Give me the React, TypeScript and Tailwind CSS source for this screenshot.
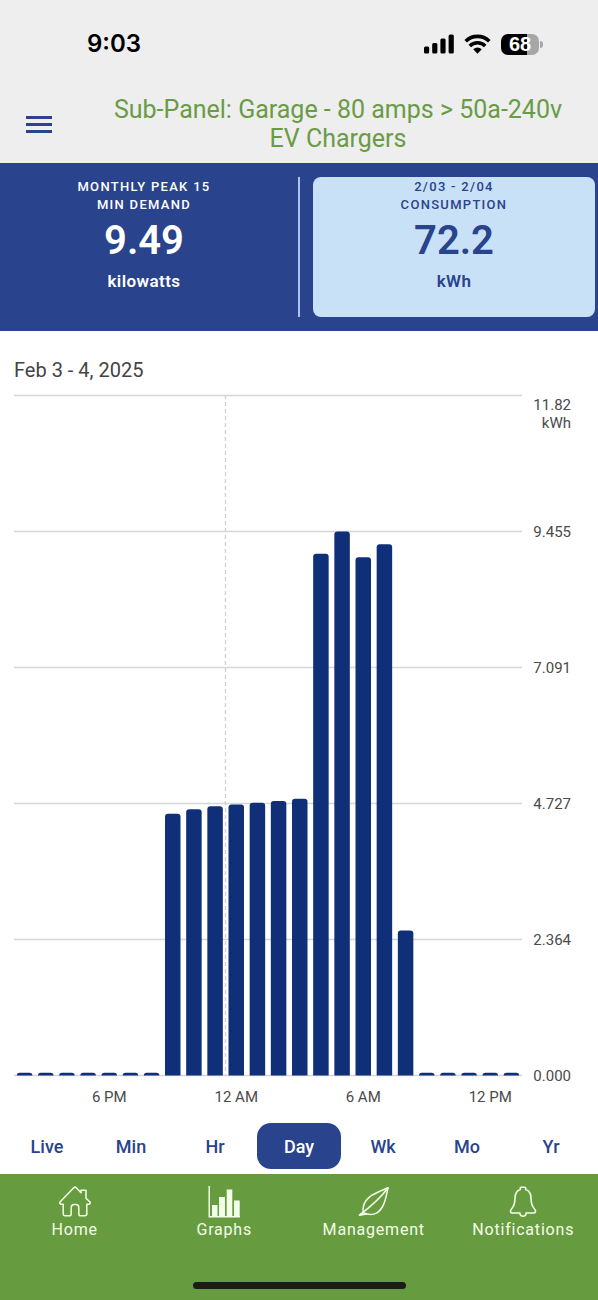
import React, { useState } from "react";
import clsx from "clsx";

const readings = [
  0, 0, 0, 0, 0, 0, 0, 4.55, 4.63, 4.68, 4.71, 4.74, 4.77, 4.81, 9.07, 9.455,
  9.01, 9.235, 2.52, 0, 0, 0, 0, 0,
];

const ranges = ["Live", "Min", "Hr", "Day", "Wk", "Mo", "Yr"];

const yTicks = ["9.455", "7.091", "4.727", "2.364", "0.000"];

const xTicks = [
  { label: "6 PM", index: 4 },
  { label: "12 AM", index: 10 },
  { label: "6 AM", index: 16 },
  { label: "12 PM", index: 22 },
];

const PLOT_WIDTH = 508;
const PLOT_HEIGHT = 680;
const MAX_KWH = 11.82;
const BAND = PLOT_WIDTH / readings.length;
const BAR_WIDTH = 15.5;

function StatusBar() {
  return (
    <div className="flex h-[88px] items-center justify-between pr-[55px] pl-[87px]">
      <span className="font-['Inter',sans-serif] text-2xl font-semibold text-black">9:03</span>
      <div className="flex items-center gap-2.5">
        <svg width="30" height="20" viewBox="0 0 30 20" aria-label="Signal">
          <rect x="0" y="12.5" width="5.2" height="7" rx="1.5" />
          <rect x="8.2" y="9" width="5.2" height="10.5" rx="1.5" />
          <rect x="16.4" y="4.5" width="5.2" height="15" rx="1.5" />
          <rect x="24.6" y="0.5" width="5.2" height="19" rx="1.5" />
        </svg>
        <svg width="27" height="20" viewBox="0 0 27 20" aria-label="Wi-Fi">
          <g fill="none" stroke="#000" strokeWidth="3.6">
            <path d="M1.700 7.200a16.800 16.800 0 0 1 23.600 0" />
            <path d="M5.800 12a10.900 10.900 0 0 1 15.400 0" />
          </g>
          <path d="M13.5 19.800l-4.300-4.500a6.200 6.200 0 0 1 8.600 0z" />
        </svg>
        <div className="flex items-center gap-px">
          <div className="flex h-[21px] w-[38px] items-center justify-center rounded-[7px] bg-linear-to-r from-black from-68% to-[#a6a6a6] to-68%">
            <span className="font-['Liberation_Sans',sans-serif] text-xl leading-none font-bold text-white">68</span>
          </div>
          <div className="h-[7px] w-[3px] rounded-r-full bg-[#a6a6a6]" />
        </div>
      </div>
    </div>
  );
}

function Header() {
  return (
    <header className="flex h-[75px] items-center pb-[3px]">
      <button aria-label="Open menu" className="flex w-[78px] flex-col items-center gap-1">
        <span className="h-[3px] w-[26px] bg-[#29438d]" />
        <span className="h-[3px] w-[26px] bg-[#29438d]" />
        <span className="h-[3px] w-[26px] bg-[#29438d]" />
      </button>
      <h1 className="flex-1 px-8 text-center text-[25px] leading-[29px] text-[#6a9b46]">
        Sub-Panel: Garage - 80 amps &gt; 50a-240v EV Chargers
      </h1>
    </header>
  );
}

type StatProps = {
  title: [string, string];
  value: string;
  unit: string;
  active?: boolean;
};

function Stat({ title, value, unit, active }: StatProps) {
  return (
    <button
      className={clsx(
        "flex h-[140px] flex-1 flex-col items-center rounded-lg pt-px",
        active ? "bg-[#c9e1f7] text-[#29438d]" : "text-white"
      )}
    >
      <span className="text-[13px] leading-[18px] font-medium tracking-widest">
        {title[0]}
        <br />
        {title[1]}
      </span>
      <span className="text-[40px] leading-[54px] font-semibold">{value}</span>
      <span className="text-[17px] leading-[26px] font-semibold tracking-wide">{unit}</span>
    </button>
  );
}

function UsageChart() {
  return (
    <svg viewBox="0 0 558 712" className="w-full" role="img" aria-label="Hourly consumption in kWh">
      {[0, 1, 2, 3, 4, 5].map((i) => (
        <line
          key={i}
          x1="0"
          x2={PLOT_WIDTH}
          y1={1.5 + (i * PLOT_HEIGHT) / 5}
          y2={1.5 + (i * PLOT_HEIGHT) / 5}
          stroke="#d6d6d6"
          strokeWidth="1.5"
        />
      ))}
      {/* midnight */}
      <line x1="211.5" x2="211.5" y1="1" y2="682" stroke="#cfcfcf" strokeWidth="1.3" strokeDasharray="4 3" />
      {readings.map((kwh, i) => {
        const height = Math.max((kwh / MAX_KWH) * PLOT_HEIGHT, 2.8);
        const x = i * BAND + (BAND - BAR_WIDTH) / 2;
        const top = 1.5 + PLOT_HEIGHT - height;
        const r = Math.min(3, height);
        return (
          <path
            key={i}
            d={`M${x} ${top + height}V${top + r}q0 ${-r} ${r} ${-r}h${BAR_WIDTH - 2 * r}q${r} 0 ${r} ${r}V${top + height}z`}
            fill="#0f3079"
          />
        );
      })}
      <g fontSize="15" fill="#4a4a4a" textAnchor="end">
        <text x="557" y="16">11.82</text>
        <text x="557" y="34">kWh</text>
        {yTicks.map((tick, i) => (
          <text key={tick} x="557" y={7 + ((i + 1) * PLOT_HEIGHT) / 5}>
            {tick}
          </text>
        ))}
      </g>
      <g fontSize="15" fill="#4a4a4a" textAnchor="middle">
        {xTicks.map(({ label, index }) => (
          <text key={label} x={(index + 0.5) * BAND} y="708">
            {label}
          </text>
        ))}
      </g>
    </svg>
  );
}

function HomeIcon() {
  return (
    <svg width="32" height="32" viewBox="0 0 32 32" fill="none" stroke="currentColor" strokeWidth="1.5" strokeLinejoin="round">
      <path d="M15 1.600q1-.9 2 0l5 5.200V4.200h5v8l4 3.800q.8 1.500-.8 2.200h-2.400v9.500q0 2-2 2h-4.200q-1.800 0-1.800-1.800V21.500q0-3-3-3h-1.600q-3 0-3 3v6.400q0 1.800-1.800 1.800H6.200q-2 0-2-2V18.200H1.800q-1.600-.7-.8-2.200z" />
    </svg>
  );
}

function GraphIcon() {
  return (
    <svg width="32" height="32" viewBox="0 0 32 32" fill="currentColor">
      <path d="M.5 0h1.500v30h30v1.500H.5z" />
      <path d="M4 19h5.500v11H4zM11 11h6v19h-6zM18.700 3.500h5.600V30h-5.600zM26 14.500h5.700V30H26z" />
    </svg>
  );
}

function LeafIcon() {
  return (
    <svg width="32" height="32" viewBox="0 0 32 32" fill="none" stroke="currentColor" strokeWidth="1.5" strokeLinecap="round" strokeLinejoin="round">
      <path d="M30 1.800C20 6 8.500 9.500 5.500 20c-.6 2.300-.7 4.600-.2 6.600 4.500 2.200 9.500 2.600 13.700.2C26.500 22 28 11 30 1.800z" />
      <path d="M30 1.800C25 9 16 18 1.500 29.200" />
      <path d="M5.300 26.600 1.500 29.200l7-1.200" />
    </svg>
  );
}

function BellIcon() {
  return (
    <svg width="32" height="32" viewBox="0 0 32 32" fill="none" stroke="currentColor" strokeWidth="1.600" strokeLinejoin="round">
      <path d="M13.300 3.400V2.100q0-.9.9-.9h3.600q.9 0 .9.900v1.300c4 1.400 5.300 4.600 5.300 8.600 0 5.300.9 8.300 3.700 11.200 1.500 1.600.9 3.800-1.200 3.800h-7.400c.1 2-1.300 3.300-3.100 3.300s-3.200-1.300-3.100-3.300H5.500c-2.100 0-2.700-2.200-1.200-3.800C7.100 20.300 8 17.300 8 12c0-4 1.300-7.200 5.300-8.600z" />
    </svg>
  );
}

const navItems = [
  { label: "Home", icon: <HomeIcon /> },
  { label: "Graphs", icon: <GraphIcon /> },
  { label: "Management", icon: <LeafIcon /> },
  { label: "Notifications", icon: <BellIcon /> },
];

export default function App() {
  const [range, setRange] = useState("Day");

  return (
    <div className="flex min-h-screen flex-col bg-white font-['Roboto',sans-serif]">
      <div className="bg-[#eeeeee]">
        <StatusBar />
        <Header />
      </div>

      {/* Summary */}
      <section className="flex bg-[#29438d] px-[3px] py-3.5">
        <Stat title={["MONTHLY PEAK 15", "MIN DEMAND"]} value="9.49" unit="kilowatts" />
        <div className="mx-[13px] w-0.5 bg-[#a9c4ee]" />
        <Stat title={["2/03 - 2/04", "CONSUMPTION"]} value="72.2" unit="kWh" active />
      </section>

      <main className="flex-1 pt-[23px]">
        <div className="pr-[26px] pl-3.5">
          <h2 className="mb-2 text-xl leading-8 text-[#444444]">Feb 3 - 4, 2025</h2>
          <UsageChart />
        </div>

        {/* Range */}
        <div className="mt-[17px] grid grid-cols-7 px-[5px] pb-[5px]">
          {ranges.map((item) => (
            <button
              key={item}
              onClick={() => setRange(item)}
              className={clsx(
                "h-[46px] rounded-[14px] pt-0.5 text-lg font-medium",
                item === range ? "bg-[#29438d] text-white" : "text-[#29438d]"
              )}
            >
              {item}
            </button>
          ))}
        </div>
      </main>

      <footer className="bg-[#669b40] pt-3 pb-[11px]">
        <nav className="grid grid-cols-4">
          {navItems.map((item) => (
            <a key={item.label} href="#" className="flex flex-col items-center text-[#f4ffe8]">
              {item.icon}
              <span className="text-base tracking-wider">{item.label}</span>
            </a>
          ))}
        </nav>
        <div className="mx-auto mt-10 h-[7px] w-[213px] rounded-full bg-[#1b1c18]" />
      </footer>
    </div>
  );
}
